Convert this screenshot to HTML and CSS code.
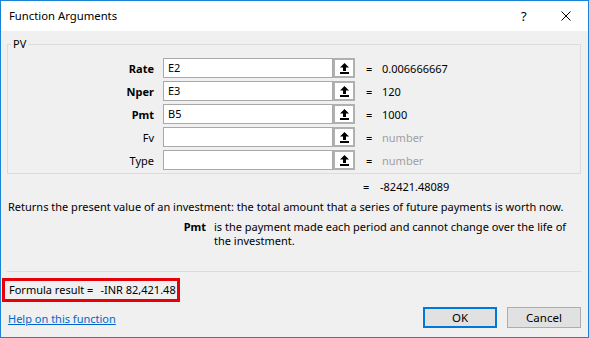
FILE: index.html
```html
<!DOCTYPE html>
<html>
  <head>
    <title>Function Arguments</title>
    <link rel="stylesheet" href="styles.css">
  </head>
  <body>
    <div class="dialog">
      <div class="titlebar">
        <span class="title">Function Arguments</span>
        <span class="help-btn">?</span>
        <span class="close-btn">
          <svg width="10" height="10" viewBox="0 0 10 10">
            <path d="M0.5 0.5 L9.5 9.5 M9.5 0.5 L0.5 9.5" stroke="#000" stroke-width="1" fill="none" />
          </svg>
        </span>
      </div>

      <div class="content">
        <fieldset class="group">
          <legend>PV</legend>

          <div class="arg-row">
            <label class="arg-label required">Rate</label>
            <div class="ref-box">E2</div>
            <span class="ref-btn"><svg width="9" height="11" viewBox="0 0 9 11"><path d="M4.5 0 L0 4.5 L3 4.5 L3 8 L6 8 L6 4.5 L9 4.5 Z M0 9 H9 V11 H0 Z" fill="#000" /></svg></span>
            <span class="eq">=</span>
            <span class="arg-value">0.006666667</span>
          </div>

          <div class="arg-row">
            <label class="arg-label required">Nper</label>
            <div class="ref-box">E3</div>
            <span class="ref-btn"><svg width="9" height="11" viewBox="0 0 9 11"><path d="M4.5 0 L0 4.5 L3 4.5 L3 8 L6 8 L6 4.5 L9 4.5 Z M0 9 H9 V11 H0 Z" fill="#000" /></svg></span>
            <span class="eq">=</span>
            <span class="arg-value">120</span>
          </div>

          <div class="arg-row">
            <label class="arg-label required">Pmt</label>
            <div class="ref-box">B5</div>
            <span class="ref-btn"><svg width="9" height="11" viewBox="0 0 9 11"><path d="M4.5 0 L0 4.5 L3 4.5 L3 8 L6 8 L6 4.5 L9 4.5 Z M0 9 H9 V11 H0 Z" fill="#000" /></svg></span>
            <span class="eq">=</span>
            <span class="arg-value">1000</span>
          </div>

          <div class="arg-row">
            <label class="arg-label">Fv</label>
            <div class="ref-box"></div>
            <span class="ref-btn"><svg width="9" height="11" viewBox="0 0 9 11"><path d="M4.5 0 L0 4.5 L3 4.5 L3 8 L6 8 L6 4.5 L9 4.5 Z M0 9 H9 V11 H0 Z" fill="#000" /></svg></span>
            <span class="eq">=</span>
            <span class="arg-value muted">number</span>
          </div>

          <div class="arg-row">
            <label class="arg-label">Type</label>
            <div class="ref-box"></div>
            <span class="ref-btn"><svg width="9" height="11" viewBox="0 0 9 11"><path d="M4.5 0 L0 4.5 L3 4.5 L3 8 L6 8 L6 4.5 L9 4.5 Z M0 9 H9 V11 H0 Z" fill="#000" /></svg></span>
            <span class="eq">=</span>
            <span class="arg-value muted">number</span>
          </div>
        </fieldset>

        <div class="total-row">
          <span class="eq">=</span>
          <span>-82421.48089</span>
        </div>

        <p class="func-desc">Returns the present value of an investment: the total amount that a series of future payments is worth now.</p>

        <div class="arg-desc">
          <span class="arg-name">Pmt</span>
          <span class="arg-text">is the payment made each period and cannot change over the life of the investment.</span>
        </div>

        <div class="separator"></div>

        <div class="formula-result">Formula result =<span class="formula-value">-INR 82,421.48</span></div>

        <div class="footer">
          <a href="#" class="help-link">Help on this function</a>
          <div class="buttons">
            <button class="btn btn-default">OK</button>
            <button class="btn">Cancel</button>
          </div>
        </div>
      </div>
    </div>
  </body>
</html>
```

FILE: styles.css
```css
html,
body {
  margin: 0;
  padding: 0;
}

body {
  font-family: "Noto Sans", "Open Sans", Arial, sans-serif;
  font-size: 11px;
  color: #000;
  background-color: #f0f0f0;
}

.dialog {
  width: 589px;
  height: 338px;
  box-sizing: border-box;
  border: 1px solid #1883d7;
  background-color: #f0f0f0;
  overflow: hidden;
}

.titlebar {
  height: 30px;
  background-color: #fff;
  display: flex;
  align-items: center;
  padding-left: 8px;
}

.title {
  flex: 1;
  font-size: 11.3px;
  line-height: 16px;
}

.help-btn {
  width: 8px;
  margin-right: 32px;
  font-size: 13px;
}

.close-btn {
  display: flex;
  margin-right: 17px;
}

.content {
  padding: 0 7px 0 6px;
}

/* argument group */
.group {
  margin: 5px 0 0 0;
  padding: 6px 0 3px 0;
  border: 1px solid #dcdcdc;
  min-width: 0;
}

.group legend {
  margin-left: 3px;
  padding: 0 2px;
  line-height: 16px;
}

.arg-row {
  display: flex;
  align-items: center;
  height: 20px;
  margin-bottom: 3px;
}

.arg-row:last-child {
  margin-bottom: 0;
}

.arg-label {
  width: 146px;
  margin-right: 9px;
  text-align: right;
}

.arg-label.required {
  font-weight: bold;
}

.ref-box {
  width: 170px;
  height: 20px;
  box-sizing: border-box;
  border: 1px solid #a9a9a9;
  background-color: #fff;
  padding: 0 4px;
  line-height: 18px;
}

.ref-btn {
  width: 22px;
  height: 20px;
  box-sizing: border-box;
  border: 2px solid #b0b0b0;
  background-color: #fff;
  display: flex;
  justify-content: center;
  align-items: center;
}

.eq {
  width: 15px;
  margin-left: 11px;
}

.arg-value {
  margin-left: 1px;
}

.muted {
  color: #a0a0a0;
}

/* totals and descriptions */
.total-row {
  margin-top: 6px;
  padding-left: 356px;
  line-height: 14px;
  display: flex;
}

.total-row .eq {
  margin-left: 0;
  width: 17px;
}

.func-desc {
  margin: 6px 0 0 1px;
  line-height: 14px;
  white-space: nowrap;
}

.arg-desc {
  display: flex;
  margin-top: 6px;
  line-height: 14px;
}

.arg-name {
  width: 199px;
  text-align: right;
  font-weight: bold;
  margin-right: 8px;
}

.arg-text {
  width: 356px;
}

.separator {
  margin-top: 23px;
  height: 1px;
  background-color: #dcdcdc;
}

.formula-result {
  margin: 6px 0 0 -5px;
  width: 178px;
  height: 24px;
  box-sizing: border-box;
  border: 3px solid #e5000a;
  padding-left: 4px;
  line-height: 18px;
  white-space: nowrap;
}

.formula-value {
  margin-left: 7px;
}

.footer {
  margin-top: 5px;
  display: flex;
  justify-content: space-between;
  align-items: center;
}

.help-link {
  margin-left: 1px;
  color: #0066cc;
  margin-top: 2px;
}

.buttons {
  display: flex;
  gap: 10px;
}

.btn {
  width: 74px;
  height: 21px;
  box-sizing: border-box;
  border: 1px solid #adadad;
  background-color: #e1e1e1;
  font-family: inherit;
  font-size: 11.5px;
  padding: 0;
}

.btn-default {
  border: 2px solid #0078d7;
}
```
